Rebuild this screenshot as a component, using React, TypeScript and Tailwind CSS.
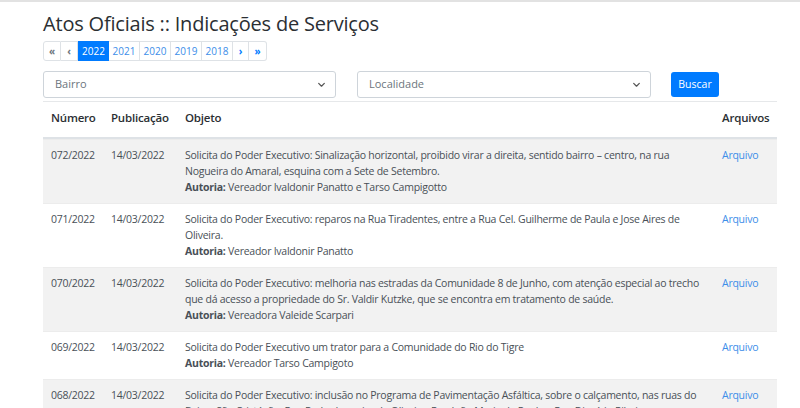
import React from "react";

const rows = [
  {
    n: "072/2022",
    d: "14/03/2022",
    lines: [
      "Solicita do Poder Executivo: Sinalização horizontal, proibido virar a direita, sentido bairro – centro, na rua",
      "Nogueira do Amaral, esquina com a Sete de Setembro.",
    ],
    autor: "Vereador Ivaldonir Panatto e Tarso Campigotto",
  },
  {
    n: "071/2022",
    d: "14/03/2022",
    lines: [
      "Solicita do Poder Executivo: reparos na Rua Tiradentes, entre a Rua Cel. Guilherme de Paula e Jose Aires de",
      "Oliveira.",
    ],
    autor: "Vereador Ivaldonir Panatto",
  },
  {
    n: "070/2022",
    d: "14/03/2022",
    lines: [
      "Solicita do Poder Executivo: melhoria nas estradas da Comunidade 8 de Junho, com atenção especial ao trecho",
      "que dá acesso a propriedade do Sr. Valdir Kutzke, que se encontra em tratamento de saúde.",
    ],
    autor: "Vereadora Valeide Scarpari",
  },
  {
    n: "069/2022",
    d: "14/03/2022",
    lines: ["Solicita do Poder Executivo um trator para a Comunidade do Rio do Tigre"],
    autor: "Vereador Tarso Campigoto",
  },
  {
    n: "068/2022",
    d: "14/03/2022",
    lines: [
      "Solicita do Poder Executivo: inclusão no Programa de Pavimentação Asfáltica, sobre o calçamento, nas ruas do",
      "Bairro São Cristóvão: Rua Pedro Joaquim de Oliveira, Rua João Maria de Paula e Rua Dionísio Ribeiro.",
    ],
    autor: "Vereador Tarso Campigoto",
  },
];

function Chevron() {
  return (
    <svg width="9" height="9" viewBox="0 0 16 16" fill="none" stroke="#555" strokeWidth="2.2" strokeLinecap="round" strokeLinejoin="round">
      <path d="M3 6l5 5 5-5" />
    </svg>
  );
}

export default function App() {
  const font = { fontFamily: '"Segoe UI", "Open Sans", "Noto Sans", sans-serif' };
  return (
    <div className="w-[800px] h-[408px] overflow-hidden bg-white border-t-2 border-[#e2e2e2] text-[#495057]" style={font}>
      <div className="ml-[43px] w-[734px]">
        <h1 className="mt-[9px] text-[20px] leading-[26px] font-medium text-[#2b2f33] tracking-[-0.2px]">
          Atos Oficiais :: Indicações de Serviços
        </h1>
        <div className="mt-[4px] flex h-[20px] text-[10px] leading-none">
          <span className="flex w-[18px] items-center justify-center rounded-l-[3px] border border-[#dee2e6] text-[#6c757d] font-bold">«</span>
          <span className="flex w-[17px] items-center justify-center border border-l-0 border-[#dee2e6] text-[#6c757d] font-bold">‹</span>
          <span className="flex w-[31px] items-center justify-center bg-[#007bff] text-white">2022</span>
          {["2021", "2020", "2019", "2018"].map((y) => (
            <span key={y} className="flex w-[31px] items-center justify-center border border-l-0 border-[#dee2e6] text-[#3d8ee9]">{y}</span>
          ))}
          <span className="flex w-[16px] items-center justify-center border border-l-0 border-[#dee2e6] text-[#007bff] font-bold">›</span>
          <span className="flex w-[18px] items-center justify-center rounded-r-[3px] border border-l-0 border-[#dee2e6] text-[#007bff] font-bold">»</span>
        </div>
        <div className="mt-[10px] flex items-center h-[27px]">
          <div className="flex h-[27px] w-[293px] items-center justify-between rounded-[3px] border border-[#ced4da] pl-[11px] pr-[9px] text-[11px] text-[#6c757d]">
            <span>Bairro</span>
            <Chevron />
          </div>
          <div className="ml-[21px] flex h-[27px] w-[294px] items-center justify-between rounded-[3px] border border-[#ced4da] pl-[11px] pr-[9px] text-[11px] text-[#6c757d]">
            <span>Localidade</span>
            <Chevron />
          </div>
          <div className="ml-[20px] flex h-[25px] w-[48px] items-center justify-center rounded-[3px] bg-[#007bff] text-[10.5px] text-white">
            Buscar
          </div>
        </div>
        <div className="mt-[3px] border-t border-[#e6e8ea]">
          <div className="grid h-[37px] grid-cols-[60px_74px_537px_63px] items-center border-b-2 border-[#dee2e6] pb-[3px] text-[11.5px] font-semibold text-[#2b2f33] tracking-[-0.2px]">
            <div className="pl-[8px]">Número</div>
            <div className="pl-[8px]">Publicação</div>
            <div className="pl-[8px]">Objeto</div>
            <div className="pl-[8px]">Arquivos</div>
          </div>
          {rows.map((r, i) => (
            <div
              key={r.n}
              className={`grid grid-cols-[60px_74px_537px_63px] border-t border-[#ececec] pt-[7px] pb-[8px] text-[10.5px] leading-[16px] tracking-[-0.25px] ${i % 2 === 0 ? "bg-[#f2f2f2]" : "bg-white"}`}
            >
              <div className="pl-[8px]">{r.n}</div>
              <div className="pl-[8px]">{r.d}</div>
              <div className="pl-[8px] whitespace-nowrap">
                {r.lines.map((l, k) => (
                  <div key={k}>{l}</div>
                ))}
                <div>
                  <span className="font-bold">Autoria:</span> {r.autor}
                </div>
              </div>
              <div className="pl-[8px] text-[#3d8ee9]">Arquivo</div>
            </div>
          ))}
        </div>
      </div>
    </div>
  );
}
